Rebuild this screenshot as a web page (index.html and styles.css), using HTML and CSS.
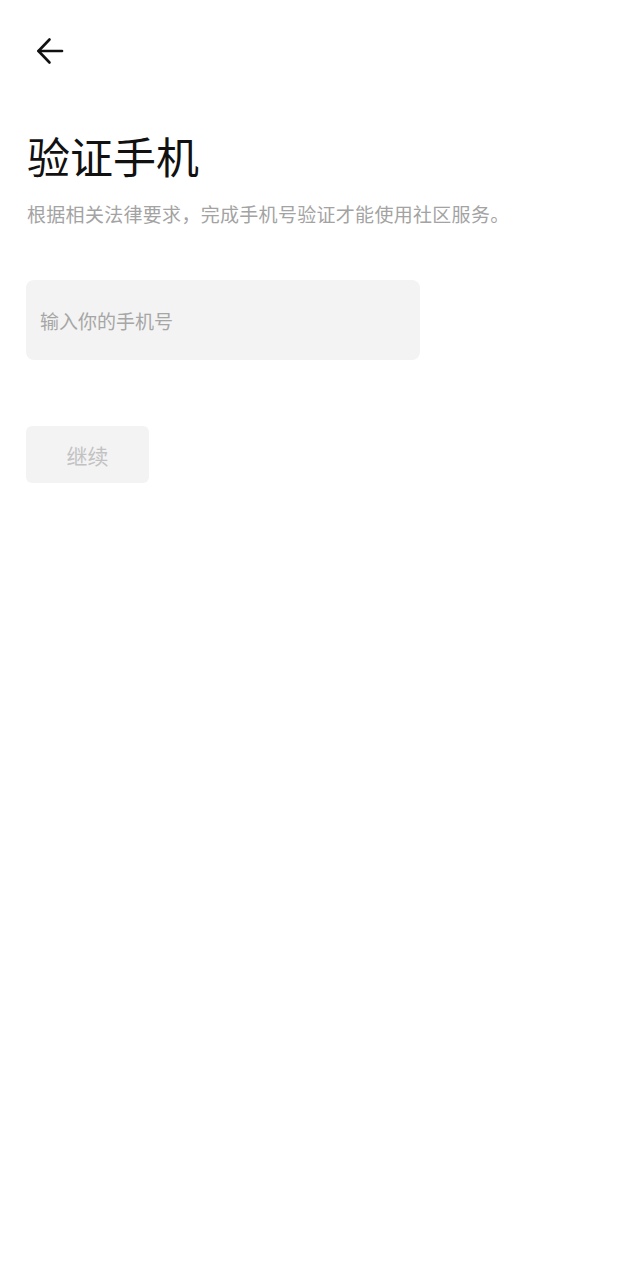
FILE: index.html
```html
<!DOCTYPE html>
<html lang="zh-CN">
<head>
<meta charset="utf-8">
<link rel="stylesheet" href="styles.css">
</head>
<body>
<div class="page">
  <div class="topbar">
    <svg class="back" width="30" height="30" viewBox="0 0 30 30" fill="none" stroke="#111" stroke-width="2.6" stroke-linecap="round" stroke-linejoin="round">
      <path d="M27 15H3.5"/>
      <path d="M14.5 3.5L3.5 15L14.5 26.5"/>
    </svg>
  </div>
  <h1 class="title">验证手机</h1>
  <p class="desc">根据相关法律要求，完成手机号验证才能使用社区服务。</p>
  <div class="field"><span class="placeholder">输入你的手机号</span></div>
  <button class="btn">继续</button>
</div>
</body>
</html>
```

FILE: styles.css
```css
html, body {
  margin: 0;
  padding: 0;
  background: #fff;
}
body {
  font-family: "Noto Sans CJK SC", "Noto Sans", sans-serif;
  color: #111;
}
.page {
  padding: 0 26px;
  display: flex;
  flex-direction: column;
  align-items: flex-start;
}
.topbar {
  height: 102px;
  display: flex;
  align-items: flex-start;
  padding-top: 36px;
  box-sizing: border-box;
}
.back {
  display: block;
  margin-left: 9px;
}
.title {
  margin: 23px 0 0 1px;
  font-size: 43px;
  font-weight: 400;
  line-height: 60px;
  color: #111;
}
.desc {
  margin: 15px 0 0 1px;
  font-size: 19px;
  line-height: 28px;
  letter-spacing: 0.3px;
  color: #a3a3a3;
}
.field {
  margin-top: 52px;
  width: 394px;
  height: 80px;
  background: #f3f3f3;
  border-radius: 8px;
  display: flex;
  align-items: center;
  padding-left: 14px;
  box-sizing: border-box;
}
.placeholder {
  font-size: 19px;
  color: #a6a6a6;
}
.btn {
  margin-top: 66px;
  width: 123px;
  height: 57px;
  border: none;
  background: #f3f3f3;
  border-radius: 6px;
  font-family: inherit;
  font-size: 21px;
  color: #c2c2c2;
  padding: 0;
}
```
